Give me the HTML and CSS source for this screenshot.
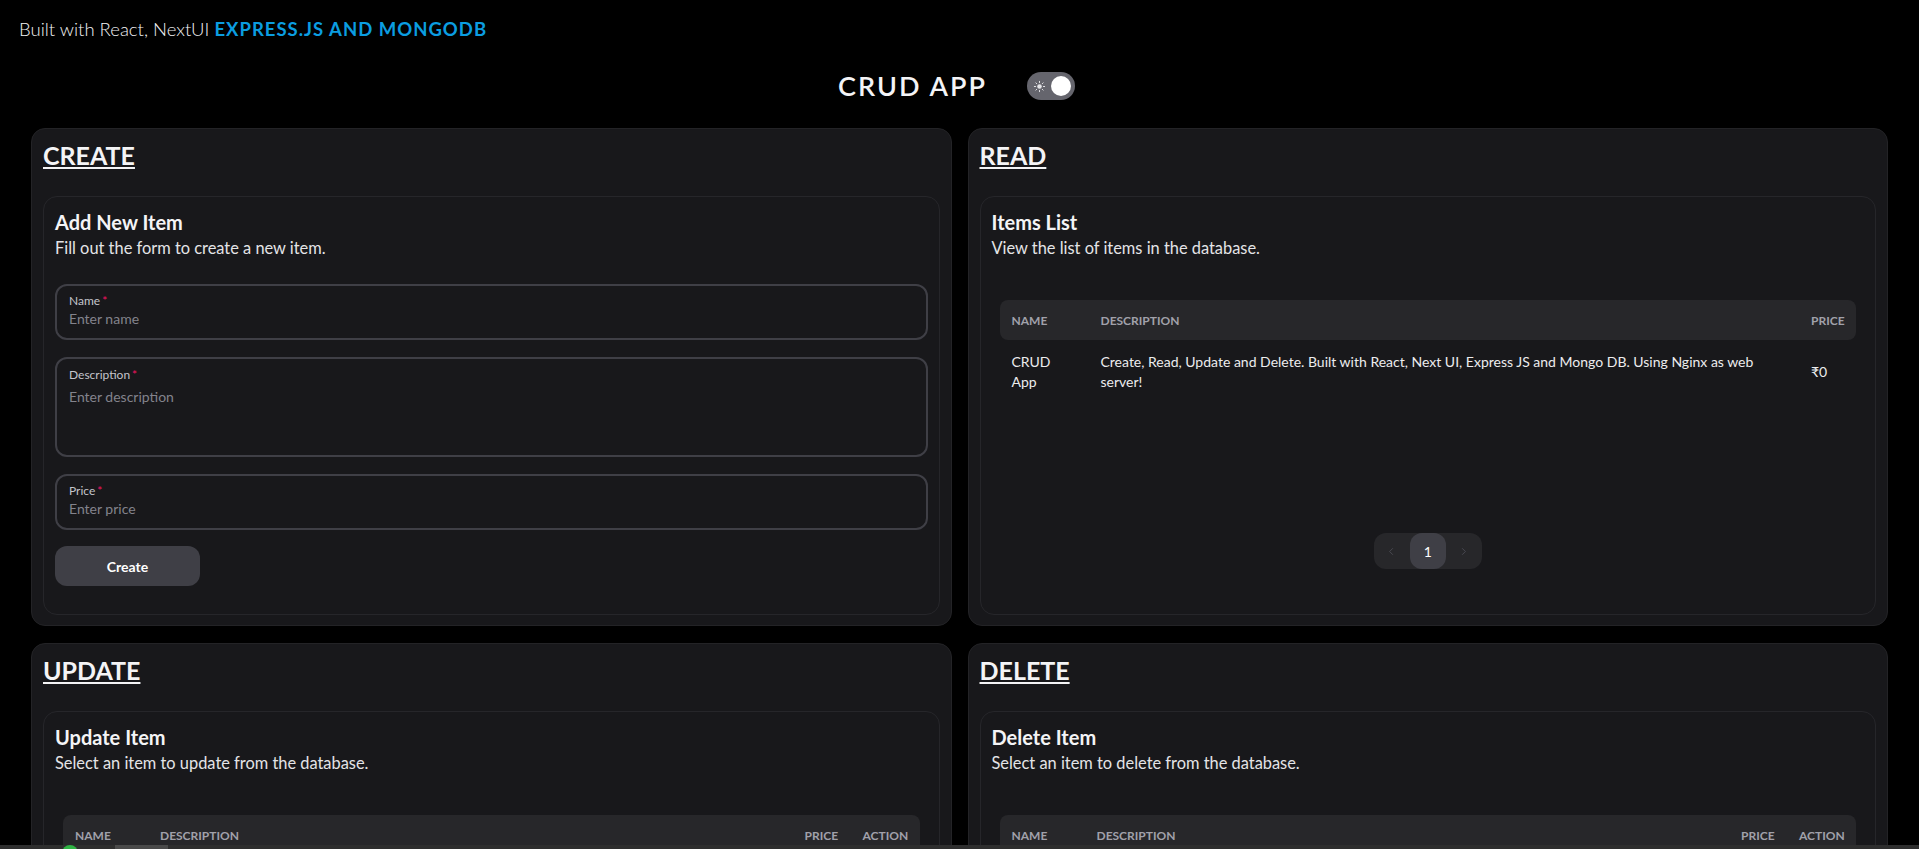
FILE: index.html
```html
<!DOCTYPE html>
<html lang="en">
<head>
<meta charset="utf-8">
<title>CRUD APP</title>
<link rel="stylesheet" href="styles.css">
</head>
<body>
<p class="credit">Built with React, NextUI <span class="credit-strong">EXPRESS.JS AND MONGODB</span></p>
<header class="app-header">
  <h1 class="app-title">CRUD APP</h1>
  <button class="theme-switch" type="button" aria-label="Toggle theme">
    <svg class="sun" viewBox="0 0 24 24" width="13" height="13"><circle cx="12" cy="12" r="4.2" fill="currentColor"/><path d="M12 2.5v2.2M12 19.3v2.2M2.5 12h2.2M19.3 12h2.2M5.3 5.3l1.5 1.5M17.2 17.2l1.5 1.5M5.3 18.7l1.5-1.5M17.2 6.8l1.5-1.5" stroke="currentColor" stroke-width="1.8" stroke-linecap="round" fill="none"/></svg>
    <span class="switch-thumb"></span>
  </button>
</header>

<main class="grid">
  <section class="panel">
    <h2 class="panel-heading">CREATE</h2>
    <div class="inner-card">
      <h3 class="card-title">Add New Item</h3>
      <p class="card-sub">Fill out the form to create a new item.</p>
      <form class="form">
        <label class="field">
          <span class="field-label">Name<span class="req">*</span></span>
          <input class="field-input" type="text" placeholder="Enter name">
        </label>
        <label class="field field-area">
          <span class="field-label">Description<span class="req">*</span></span>
          <textarea class="field-input field-textarea" placeholder="Enter description"></textarea>
        </label>
        <label class="field">
          <span class="field-label">Price<span class="req">*</span></span>
          <input class="field-input" type="text" placeholder="Enter price">
        </label>
        <button class="btn" type="button">Create</button>
      </form>
    </div>
  </section>

  <section class="panel">
    <h2 class="panel-heading">READ</h2>
    <div class="inner-card">
      <h3 class="card-title">Items List</h3>
      <p class="card-sub">View the list of items in the database.</p>
      <div class="table-wrap">
        <table class="items-table read-table">
          <colgroup><col class="c-name"><col><col class="c-price"></colgroup>
          <thead><tr><th>Name</th><th>Description</th><th>Price</th></tr></thead>
          <tbody>
            <tr><td>CRUD App</td><td class="desc">Create, Read, Update and Delete. Built with React, Next UI, Express JS and Mongo DB. Using Nginx as web server!</td><td>₹0</td></tr>
          </tbody>
        </table>
        <nav class="pager" aria-label="pagination">
          <span class="pager-item"><svg viewBox="0 0 24 24" width="13" height="13"><path d="M14.5 18l-6-6 6-6" fill="none" stroke="currentColor" stroke-width="1.4"/></svg></span>
          <span class="pager-item is-active">1</span>
          <span class="pager-item"><svg viewBox="0 0 24 24" width="13" height="13"><path d="M9.5 6l6 6-6 6" fill="none" stroke="currentColor" stroke-width="1.4"/></svg></span>
        </nav>
      </div>
    </div>
  </section>

  <section class="panel">
    <h2 class="panel-heading">UPDATE</h2>
    <div class="inner-card">
      <h3 class="card-title">Update Item</h3>
      <p class="card-sub">Select an item to update from the database.</p>
      <div class="table-wrap">
        <table class="items-table action-table">
          <colgroup><col class="c-name2"><col><col class="c-price2"><col class="c-action"></colgroup>
          <thead><tr><th>Name</th><th>Description</th><th>Price</th><th>Action</th></tr></thead>
          <tbody>
            <tr><td>CRUD App</td><td class="desc">Create, Read, Update and Delete. Built with React, Next UI, Express JS and Mongo DB. Using Nginx as web server!</td><td>₹0</td><td><span class="act-icon"><svg viewBox="0 0 24 24" width="16" height="16"><path d="M4 20h4L19 9l-4-4L4 16v4z" fill="none" stroke="currentColor" stroke-width="1.6" stroke-linejoin="round"/></svg></span></td></tr>
          </tbody>
        </table>
        <nav class="pager" aria-label="pagination">
          <span class="pager-item"><svg viewBox="0 0 24 24" width="13" height="13"><path d="M14.5 18l-6-6 6-6" fill="none" stroke="currentColor" stroke-width="1.4"/></svg></span>
          <span class="pager-item is-active">1</span>
          <span class="pager-item"><svg viewBox="0 0 24 24" width="13" height="13"><path d="M9.5 6l6 6-6 6" fill="none" stroke="currentColor" stroke-width="1.4"/></svg></span>
        </nav>
      </div>
    </div>
  </section>

  <section class="panel">
    <h2 class="panel-heading">DELETE</h2>
    <div class="inner-card">
      <h3 class="card-title">Delete Item</h3>
      <p class="card-sub">Select an item to delete from the database.</p>
      <div class="table-wrap">
        <table class="items-table action-table">
          <colgroup><col class="c-name2"><col><col class="c-price2"><col class="c-action"></colgroup>
          <thead><tr><th>Name</th><th>Description</th><th>Price</th><th>Action</th></tr></thead>
          <tbody>
            <tr><td>CRUD App</td><td class="desc">Create, Read, Update and Delete. Built with React, Next UI, Express JS and Mongo DB. Using Nginx as web server!</td><td>₹0</td><td><span class="act-icon danger"><svg viewBox="0 0 24 24" width="16" height="16"><path d="M4 7h16M9 7V4h6v3M6 7l1 13h10l1-13" fill="none" stroke="currentColor" stroke-width="1.6" stroke-linejoin="round"/></svg></span></td></tr>
          </tbody>
        </table>
        <nav class="pager" aria-label="pagination">
          <span class="pager-item"><svg viewBox="0 0 24 24" width="13" height="13"><path d="M14.5 18l-6-6 6-6" fill="none" stroke="currentColor" stroke-width="1.4"/></svg></span>
          <span class="pager-item is-active">1</span>
          <span class="pager-item"><svg viewBox="0 0 24 24" width="13" height="13"><path d="M9.5 6l6 6-6 6" fill="none" stroke="currentColor" stroke-width="1.4"/></svg></span>
        </nav>
      </div>
    </div>
  </section>
</main>

<div class="taskbar"><span class="tb-dot"></span><span class="tb-block"></span></div>
</body>
</html>
```

FILE: styles.css
```css
* { box-sizing: border-box; }

html, body {
  background: #000;
}

body {
  margin: 0;
  color: #ececee;
  font-family: Lato, "DejaVu Sans", sans-serif;
}

.credit {
  margin: 0;
  padding: 15px 18px 0 19px;
  font-size: 18.5px;
  line-height: 28px;
  font-weight: 300;
  color: #f2f2f4;
}

.credit-strong {
  font-weight: 700;
  letter-spacing: 1px;
  color: #0b9de0;
}

.app-header {
  display: flex;
  justify-content: center;
  align-items: center;
  gap: 40px;
  margin-top: 29px;
  padding-right: 6px;
  height: 28px;
}

.app-title {
  margin: 0;
  font-size: 27px;
  line-height: 28px;
  font-weight: 600;
  letter-spacing: 2px;
  color: #f4f4f6;
}

.theme-switch {
  width: 48px;
  height: 28px;
  border: 0;
  border-radius: 14px;
  background: #65656d;
  padding: 0 4px 0 6px;
  display: flex;
  align-items: center;
  justify-content: space-between;
  color: #e4e4e7;
}

.switch-thumb {
  width: 20px;
  height: 20px;
  border-radius: 50%;
  background: #fff;
}

.grid {
  display: grid;
  grid-template-columns: 1fr 1fr;
  gap: 17px 16px;
  padding: 28px 31px 40px;
}

.panel {
  background: #18181b;
  border: 1px solid #232326;
  border-radius: 14px;
  padding: 11px 11px 10px;
  display: flex;
  flex-direction: column;
}

.panel-heading {
  margin: 0 0 26px;
  font-size: 25px;
  line-height: 30px;
  font-weight: 700;
  text-decoration: underline;
  text-decoration-thickness: 2px;
  text-underline-offset: 2px;
  color: #f4f4f6;
}

.inner-card {
  flex: 1;
  display: flex;
  flex-direction: column;
  border: 1px solid #26262a;
  border-radius: 14px;
  padding: 12px 11px 28px;
}

.card-title {
  margin: 0;
  font-size: 20px;
  line-height: 26px;
  font-weight: 700;
  color: #f4f4f6;
}

.card-sub {
  margin: 1px 0 0;
  font-size: 16.4px;
  line-height: 24px;
  color: #e4e4e7;
}

.form {
  display: flex;
  flex-direction: column;
  align-items: flex-start;
  gap: 17px;
  margin-top: 24px;
}

.field {
  align-self: stretch;
  display: flex;
  flex-direction: column;
  justify-content: center;
  height: 56px;
  border: 2px solid #3f3f46;
  border-radius: 12px;
  padding: 0 12px 2px;
  cursor: text;
}

.field-area {
  height: 100px;
  justify-content: flex-start;
  padding-top: 8px;
}

.field-label {
  font-size: 12px;
  line-height: 16px;
  color: #c4c4cb;
}

.req {
  color: #f31260;
  margin-left: 2px;
}

.field-input {
  display: block;
  width: 100%;
  background: transparent;
  border: 0;
  outline: 0;
  padding: 0;
  font-family: inherit;
  font-size: 14px;
  line-height: 20px;
  height: 20px;
  color: #ececee;
}

.field-input::placeholder {
  color: #83838c;
}

.field-textarea {
  flex: 1;
  margin-top: 4px;
  resize: none;
}

.btn {
  width: 145px;
  height: 40px;
  margin-top: -1px;
  border: 0;
  border-radius: 12px;
  background: #3f3f46;
  color: #fff;
  font-family: inherit;
  font-size: 14px;
  font-weight: 700;
}

.table-wrap {
  flex: 1;
  display: flex;
  flex-direction: column;
  margin-top: 24px;
  padding: 16px 8px 17px;
}

.items-table {
  width: 100%;
  table-layout: fixed;
  border-collapse: separate;
  border-spacing: 0;
}

.read-table .c-name { width: 89px; }
.read-table .c-price { width: 57px; }
.action-table .c-name2 { width: 85px; }
.action-table .c-price2 { width: 58px; }
.action-table .c-action { width: 69px; }

.items-table th {
  height: 40px;
  padding: 0 12px;
  background: #27272a;
  color: #a1a1aa;
  font-size: 12px;
  font-weight: 700;
  text-align: left;
  text-transform: uppercase;
  white-space: nowrap;
}

.items-table th:first-child { border-radius: 8px 0 0 8px; }
.items-table th:last-child { border-radius: 0 8px 8px 0; }

.items-table td {
  padding: 12px 12px 8px;
  font-size: 14px;
  line-height: 20px;
  color: #ececee;
  vertical-align: middle;
}

.act-icon {
  display: inline-flex;
  color: #a1a1aa;
}

.act-icon.danger { color: #f31260; }

.pager {
  margin-top: auto;
  align-self: center;
  display: flex;
  background: #27272a;
  border-radius: 12px;
}

.pager-item {
  width: 36px;
  height: 36px;
  display: flex;
  align-items: center;
  justify-content: center;
  border-radius: 12px;
  color: #52525b;
  font-size: 14px;
}

.pager-item.is-active {
  background: #3f3f46;
  color: #fff;
}

.taskbar {
  position: fixed;
  left: 0;
  right: 0;
  bottom: 0;
  height: 4px;
  background: #2e2e2e;
}

.tb-dot {
  position: absolute;
  left: 62px;
  top: 0;
  width: 16px;
  height: 16px;
  border-radius: 50%;
  background: #2fb344;
}

.tb-block {
  position: absolute;
  left: 115px;
  top: 0;
  width: 53px;
  height: 4px;
  background: #4a4a4a;
}
```
